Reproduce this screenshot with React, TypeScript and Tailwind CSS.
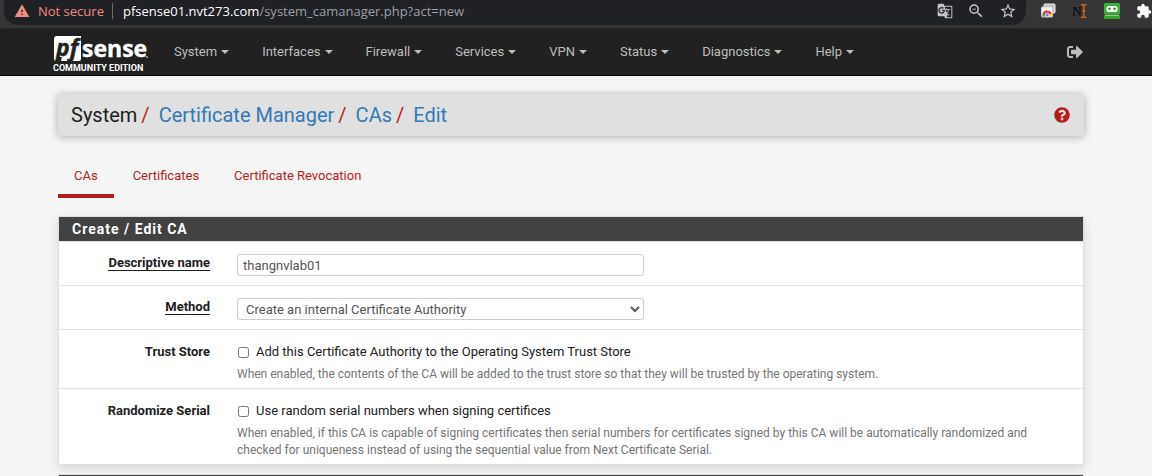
import type { ReactNode } from "react";
import { FaQuestionCircle, FaSignOutAlt } from "react-icons/fa";
import { MdExtension, MdGTranslate, MdStarBorder, MdWarning, MdZoomOut } from "react-icons/md";

const MENUS = ["System", "Interfaces", "Firewall", "Services", "VPN", "Status", "Diagnostics", "Help"];
const TABS = ["CAs", "Certificates", "Certificate Revocation"];
const CRUMBS = ["Certificate Manager", "CAs", "Edit"];

function TabsExtensionIcon() {
  return (
    <svg width="16" height="16" viewBox="0 0 16 16" aria-hidden="true">
      <rect x="4" y="1" width="11" height="9" rx="1" fill="#bdbdbd" stroke="#f5f5f5" />
      <rect x="1.5" y="4" width="11" height="10" rx="1" fill="#f5f5f5" stroke="#cfcfcf" />
      <path d="M2.500 13.500A4.700 4.700 0 0 1 11.800 11H7z" fill="#e53935" />
      <path d="M2.500 13.500L4 10.500L7.200 13.500z" fill="#34a853" />
      <path d="M8 11h3.800v2.500H8z" fill="#fbc02d" />
      <circle cx="7.200" cy="12" r="1.900" fill="#4285f4" stroke="#fff" strokeWidth=".7" />
    </svg>
  );
}

function CursorExtensionIcon() {
  return (
    <svg width="16" height="16" viewBox="0 0 16 16" aria-hidden="true">
      <path
        d="M.5 4h3l4 6.200V5L6.500 4.600V4H9.500v.6l-1 .4v7.500H7.300L2.500 5.500v6l1.200.4v.6H.5v-.6l1-.4V5l-1-.4z"
        fill="#111"
      />
      <path
        d="M9 1.500q2.500 0 2.800 1.500Q12 1.500 14.500 1.500M11.800 3v10M9 14.500q2.500 0 2.800-1.500q.2 1.500 2.700 1.500M10.300 8h3"
        fill="none"
        stroke="#d2691e"
        strokeWidth="1.400"
      />
    </svg>
  );
}

function RobotExtensionIcon() {
  return (
    <svg width="16" height="16" viewBox="0 0 16 16" aria-hidden="true">
      <rect width="16" height="11.500" rx="1.500" fill="#3cb034" />
      <rect x="2.500" y="3" width="11" height="6" rx="2.500" fill="#fff" />
      <circle cx="5.500" cy="5.800" r="1.300" fill="#2b8f26" />
      <circle cx="10.500" cy="5.800" r="1.300" fill="#2b8f26" />
      <rect y="12" width="16" height="4" rx="1" fill="#2fa428" />
      <path d="M1 12.300h14" stroke="#b9e8b5" strokeWidth=".8" />
    </svg>
  );
}

function BrowserBar() {
  return (
    <div className="flex h-[29px] items-start justify-between border-b border-[#2a2a2a] bg-[#353535] pl-1 font-['Open_Sans','Noto_Sans',sans-serif] text-[13px]">
      <div className="flex h-[25px] grow items-center rounded-b-[14px] bg-[#202124] pr-[9px] pb-[3px] pl-2.5">
        <MdWarning className="size-4 text-[#f28b82]" />
        <span className="ml-2 text-[#f28b82]">Not secure</span>
        <span className="mr-[10px] ml-2 h-4 w-px bg-[#6b6c6f]" />
        <span className="grow text-[#9aa0a6]">
          <span className="text-white">pfsense01.nvt273.com</span>/system_camanager.php?act=new
        </span>
        <div className="flex items-center gap-3.5 text-[#c4c5c7]">
          <button aria-label="Translate"><MdGTranslate className="size-4" /></button>
          <button aria-label="Zoom"><MdZoomOut className="size-[18px]" /></button>
          <button aria-label="Bookmark"><MdStarBorder className="size-[18px]" /></button>
        </div>
      </div>
      <div className="flex h-[22px] items-center gap-4 pl-3.5">
        <button aria-label="Tabs"><TabsExtensionIcon /></button>
        <button aria-label="Cursor"><CursorExtensionIcon /></button>
        <button aria-label="Forms"><RobotExtensionIcon /></button>
        <button aria-label="Extensions"><MdExtension className="size-4 text-white" /></button>
      </div>
    </div>
  );
}

function Logo() {
  return (
    <a href="#" className="block w-24 pt-1 text-white" aria-label="pfsense community edition">
      <svg width="96" height="27" viewBox="0 0 96 27" className="block overflow-visible">
        <path d="M4 1H28V24Q28 26 26 26H8L9 22L5.500 22L4.500 26H3Q1 26 1 24V4Q1 1 4 1Z" fill="#fff" />
        <g fontFamily="Open Sans, sans-serif" fontWeight="700">
          <text x="3" y="21" fontSize="23" fontStyle="italic" fill="#212121" stroke="#212121" strokeWidth=".5">pf</text>
          <text x="29" y="22" fontSize="23" fill="#fff" stroke="#fff" strokeWidth=".4">sense</text>
        </g>
        <circle cx="94" cy="22" r="1" fill="#aaa" />
      </svg>
      <span className="mt-px block text-[9px] leading-[11px] font-bold whitespace-nowrap">COMMUNITY EDITION</span>
    </a>
  );
}

function NavBar() {
  return (
    <header className="flex h-[47px] items-center border-b border-black bg-[#212121] pr-[69px] pl-[53px] text-[#bdbdbd]">
      <Logo />
      <nav className="ml-[9px] flex grow">
        {MENUS.map((name) => (
          <button key={name} className="flex items-center gap-1 pr-[17px] pl-4">
            {name}
            <span className="border-x-4 border-t-4 border-x-transparent border-t-[#bdbdbd]" />
          </button>
        ))}
      </nav>
      <button aria-label="Log out"><FaSignOutAlt className="size-4" /></button>
    </header>
  );
}

function Row({ label, htmlFor, required, children }: { label: string; htmlFor: string; required?: boolean; children: ReactNode }) {
  return (
    <div className="grid grid-cols-[151px_1fr] gap-x-[27px] border-t border-[#e0e0e0] pt-3 pr-[15px] pb-[5px]">
      <div className="text-right font-bold">
        <label
          htmlFor={htmlFor}
          className={required ? "inline-block border-b border-[#212121] pt-px leading-[14px]" : "inline-block pt-px"}
        >
          {label}
        </label>
      </div>
      <div>{children}</div>
    </div>
  );
}

function CheckRow({ id, label, text, help }: { id: string; label: string; text: string; help: string }) {
  return (
    <Row label={label} htmlFor={id}>
      <div className="flex items-center gap-[7px] pt-px pl-px">
        <input id={id} type="checkbox" className="size-[11px]" />
        <label htmlFor={id}>{text}</label>
      </div>
      <p className="mt-[5px] text-xs leading-[17px] text-[#757575]">{help}</p>
    </Row>
  );
}

export default function App() {
  return (
    <div className="h-screen overflow-hidden bg-[#f5f5f5] font-[Roboto,sans-serif] text-[13px] leading-[18px] text-[#212121]">
      <BrowserBar />
      <NavBar />
      <main className="pt-[18px] pr-[68px] pl-[58px]">
        <div className="flex h-[42px] items-center justify-between rounded-xs bg-[#e0e0e0] pr-[14px] pl-[13px] shadow-[0_1px_8px_rgba(0,0,0,0.3)]">
          <h1 className="text-xl">
            System
            {CRUMBS.map((name) => (
              <span key={name}>
                <span className="mr-[9px] ml-1 text-[#b71c1c]">/</span>
                <a href="#" className="text-[#337ab7]">{name}</a>
              </span>
            ))}
          </h1>
          <button aria-label="Help for this page"><FaQuestionCircle className="size-4 text-[#b71c1c]" /></button>
        </div>

        <nav className="mt-[22px] flex gap-[3px]">
          {TABS.map((name, i) => (
            <a
              key={name}
              href="#"
              className={`border-b-4 px-4 py-[9px] text-[#b71c1c] ${i === 0 ? "border-[#b71c1c]" : "border-transparent"}`}
            >
              {name}
            </a>
          ))}
        </nav>

        <section className="mt-[18px] border border-[#dddddd] bg-white shadow-[0_4px_10px_rgba(0,0,0,0.12)]">
          <h2 className="bg-[#424242] px-[13px] py-[3px] text-sm leading-[18px] font-bold tracking-[1px] text-white">
            Create / Edit CA
          </h2>
          <Row label="Descriptive name" htmlFor="name" required>
            <input
              id="name"
              defaultValue="thangnvlab01"
              className="mb-1 block h-[22px] w-[49%] rounded-[3px] border border-[#cccccc] px-[5px] text-[#555555]"
            />
          </Row>
          <Row label="Method" htmlFor="method" required>
            <select
              id="method"
              className="mb-1 block h-[22px] w-[49%] rounded-[3px] border border-[#cccccc] bg-white px-1 text-[#555555]"
            >
              <option>Create an internal Certificate Authority</option>
            </select>
          </Row>
          <CheckRow
            id="trust"
            label="Trust Store"
            text="Add this Certificate Authority to the Operating System Trust Store"
            help="When enabled, the contents of the CA will be added to the trust store so that they will be trusted by the operating system."
          />
          <CheckRow
            id="random"
            label="Randomize Serial"
            text="Use random serial numbers when signing certifices"
            help="When enabled, if this CA is capable of signing certificates then serial numbers for certificates signed by this CA will be automatically randomized and checked for uniqueness instead of using the sequential value from Next Certificate Serial."
          />
        </section>
        <section className="mt-[9px] h-6 border border-[#dddddd] bg-[#424242]" />
      </main>
    </div>
  );
}
